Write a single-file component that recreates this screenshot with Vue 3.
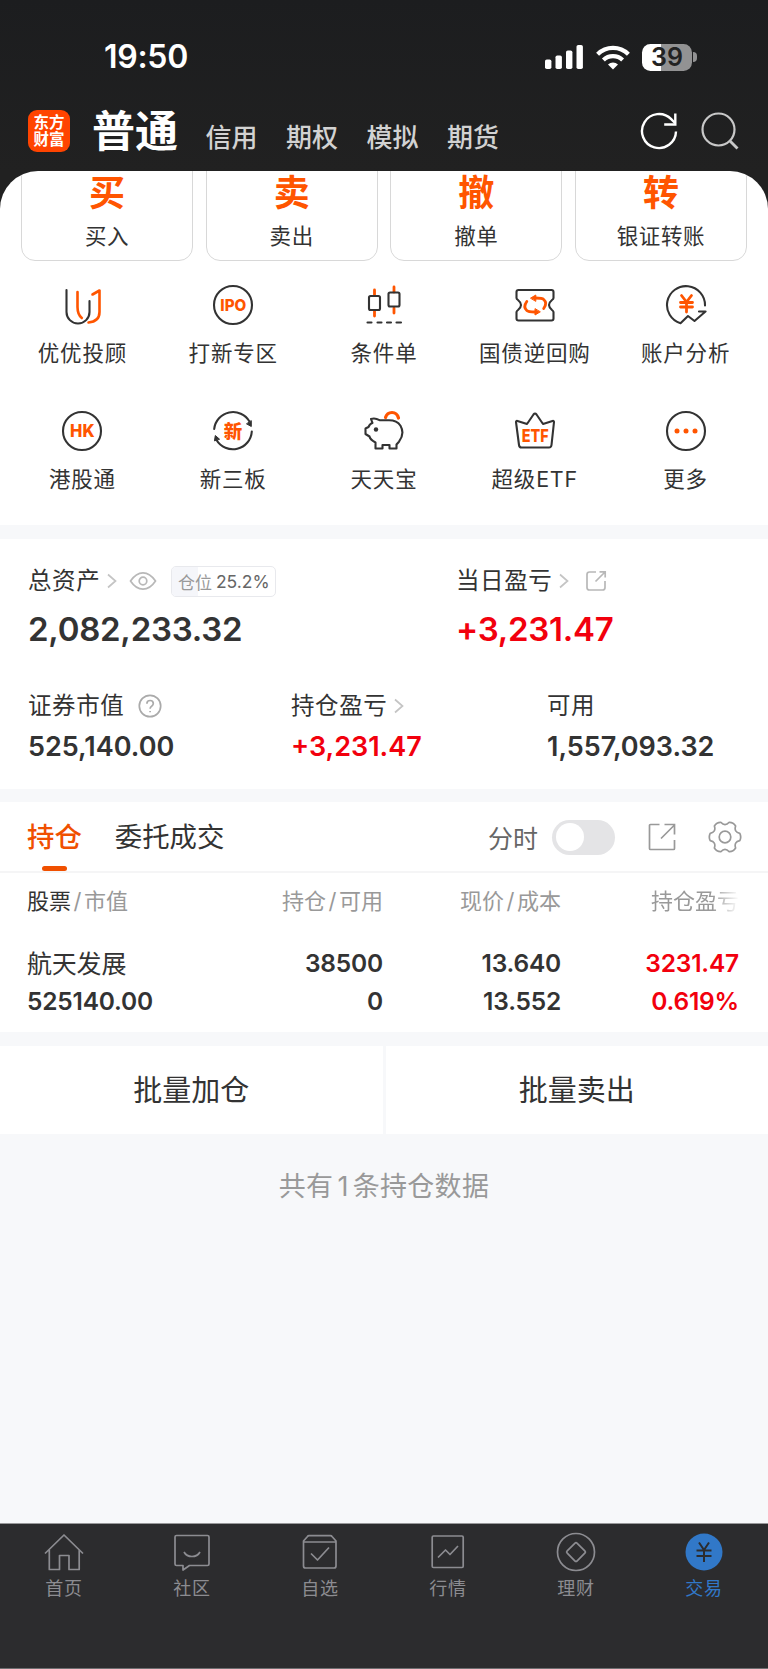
<script setup>
import { ref } from 'vue';

const accountTabs = ['信用', '期权', '模拟', '期货'];

const actions = [
  { mark: '买', label: '买入' },
  { mark: '卖', label: '卖出' },
  { mark: '撤', label: '撤单' },
  { mark: '转', label: '银证转账' }
];

const services = [
  { icon: 'advisor', label: '优优投顾' },
  { icon: 'ipo', label: '打新专区' },
  { icon: 'condition', label: '条件单' },
  { icon: 'repo', label: '国债逆回购' },
  { icon: 'analysis', label: '账户分析' },
  { icon: 'hk', label: '港股通' },
  { icon: 'neeq', label: '新三板' },
  { icon: 'piggy', label: '天天宝' },
  { icon: 'etf', label: '超级ETF' },
  { icon: 'more', label: '更多' }
];

const positions = [
  {
    name: '航天发展',
    value: '525140.00',
    amount: '38500',
    available: '0',
    price: '13.640',
    cost: '13.552',
    profit: '3231.47',
    rate: '0.619%'
  }
];

const navItems = [
  { icon: 'home', label: '首页' },
  { icon: 'community', label: '社区' },
  { icon: 'watch', label: '自选' },
  { icon: 'market', label: '行情' },
  { icon: 'wealth', label: '理财' },
  { icon: 'trade', label: '交易' }
];

const currentNav = ref('trade');
const showMinute = ref(false);
const positionRate = 25.2;
</script>

<template>
  <div class="page">
    <header class="header">
      <div class="status-bar">
        <span class="time">19:50</span>
        <div class="status-icons">
          <svg class="signal" width="38" height="24" viewBox="0 0 38 24" fill="#fff">
            <rect x="0" y="14.5" width="6.4" height="9.5" rx="1.8" />
            <rect x="10.5" y="10.5" width="6.4" height="13.5" rx="1.8" />
            <rect x="21" y="5.5" width="6.4" height="18.5" rx="1.8" />
            <rect x="31.5" y="0" width="6.4" height="24" rx="1.8" />
          </svg>
          <svg class="wifi" width="34" height="25" viewBox="0 0 34 25" fill="none" stroke="#fff" stroke-width="4.2">
            <path d="M1.6 9.2a22 22 0 0 1 30.8 0" />
            <path d="M7.4 15a13.8 13.8 0 0 1 19.2 0" />
            <path d="M17 24.6l-5-5a7.2 7.2 0 0 1 10 0z" fill="#fff" stroke="none" />
          </svg>
          <div class="battery"><span>39</span></div>
          <i class="battery-cap"></i>
        </div>
      </div>
      <div class="account-bar">
        <div class="logo"><span>东方</span><span>财富</span></div>
        <h1>普通</h1>
        <nav class="account-tabs">
          <span v-for="tab in accountTabs" :key="tab">{{ tab }}</span>
        </nav>
        <svg class="refresh" width="38" height="38" viewBox="0 0 38 38" fill="none" stroke="#fff" stroke-width="2.4">
          <path d="M36 19.5A17 17 0 1 1 31.2 7.2L35 11" />
          <path d="M35.3 1.5v11H24.2" />
        </svg>
        <svg class="search" width="38" height="38" viewBox="0 0 38 38" fill="none" stroke="#c8c8c8" stroke-width="2.2">
          <circle cx="17.5" cy="17.5" r="16" />
          <path d="M28.5 28.5l8 8" stroke-width="2.8" />
        </svg>
      </div>
    </header>

    <section class="menu-wrap">
      <div class="menu">
        <div class="actions">
          <div v-for="item in actions" :key="item.label" class="action">
            <span class="action-mark">{{ item.mark }}</span>
            <span class="action-label">{{ item.label }}</span>
          </div>
        </div>
        <div class="services">
          <div v-for="item in services" :key="item.icon" class="service">
            <svg width="42" height="42" viewBox="0 0 42 42" fill="none" stroke="#333" stroke-width="2.1" stroke-linecap="round" stroke-linejoin="round">
              <template v-if="item.icon === 'advisor'">
                <path d="M5.500 6v22a11.500 11.500 0 0 0 23 0V17" />
                <path d="M16.500 8v15q0 7.500 4.300 11M31.500 10.500L38.500 6.500V28q0 9.500-11 10.500" stroke="#ff5500" stroke-width="2.600" />
              </template>
              <template v-else-if="item.icon === 'ipo'">
                <circle cx="21" cy="21" r="19" />
                <text x="21.300" y="27" class="icon-text" font-size="16.500" textLength="26" lengthAdjust="spacingAndGlyphs">IPO</text>
              </template>
              <template v-else-if="item.icon === 'condition'">
                <path d="M11.500 6v5M11.500 27v5M31 3v5M31 24v5" stroke="#ff5500" stroke-width="2.800" />
                <rect x="6" y="12" width="11" height="14" rx="1.500" />
                <rect x="25.500" y="8.500" width="11" height="14" rx="1.500" />
                <path d="M4.500 38.500h4M14.500 38.500h4M24 38.500h4M33.500 38.500h4.500" />
              </template>
              <template v-else-if="item.icon === 'repo'">
                <path d="M4.500 6h33q2 0 2 2v6q0 1-1.500 2-6 5 0 10 1.500 1 1.500 2v6.500q0 2-2 2h-33q-2 0-2-2V28q0-1 1.500-2 6-5 0-10-1.500-1-1.500-2V8q0-2 2-2z" />
                <path d="M12.800 17.500q-4 5.500 0 9 1.500 1.500 8 1.500M29.700 24.500q4-5.500 0-9-1.500-1.500-8-1.500" stroke="#ff5500" stroke-width="2.800" />
                <path d="M16.800 14l5-3v6zM26 28l-5 3v-6z" fill="#ff5500" stroke="#ff5500" stroke-width="1" />
              </template>
              <template v-else-if="item.icon === 'analysis'">
                <path d="M40 21.500A19 19 0 1 0 15.500 39.300L23 32l6.500 5L40.500 27.500h-6.500" />
                <path d="M16.500 11.500l5 6.500 5-6.500M15.500 18.500h12M15.500 23h12M21.500 18.500v9.500" stroke="#ff5500" stroke-width="2.800" />
              </template>
              <template v-else-if="item.icon === 'hk'">
                <circle cx="21" cy="21" r="19" />
                <text x="21.300" y="27.300" class="icon-text" font-size="17.500" textLength="24.500" lengthAdjust="spacingAndGlyphs">HK</text>
              </template>
              <template v-else-if="item.icon === 'neeq'">
                <path d="M2.200 19A19 19 0 0 1 37.500 11.500M39.800 21.500A19 19 0 0 1 4.500 30" />
                <path d="M39.300 11v5.500l-4.500-2.500zM2.500 30.500l.800-5 4 3.500z" fill="#333" stroke-width="1" />
                <text x="21" y="27.500" class="icon-text" font-size="18.500">新</text>
              </template>
              <template v-else-if="item.icon === 'piggy'">
                <path d="M22.500 7.500q1.500-5 6.500-5t6.500 5.500" stroke="#ff5500" stroke-width="3.200" />
                <path d="M8 9q4-1.500 8.500 1.200H26q8 0 11.500 5.500 4.500 8-1.500 16l-2.500 2.800v4h-7v-3.500h-7v3.500H12.500v-6Q7 29.500 6.500 26.500L2.500 24v-5.500L5.500 17Q7 13.500 9.500 13z" />
                <circle cx="13" cy="19.500" r="2.200" fill="#333" stroke="none" />
              </template>
              <template v-else-if="item.icon === 'etf'">
                <path d="M2 12q0-1.500 1.500-1L13 14l6.500-9.500q1.500-2 3 0L29 14l9.500-3q1.500-.500 1.500 1l-2.500 23q-.300 2.500-2.500 2.500H7.500q-2.200 0-2.500-2.500z" />
                <text x="21.300" y="31.500" class="icon-text" font-size="18" textLength="27" lengthAdjust="spacingAndGlyphs">ETF</text>
              </template>
              <template v-else>
                <circle cx="21" cy="21" r="19" />
                <g fill="#ff5500" stroke="none">
                  <circle cx="12" cy="21" r="2.500" />
                  <circle cx="21" cy="21" r="2.500" />
                  <circle cx="30" cy="21" r="2.500" />
                </g>
              </template>
            </svg>
            <span>{{ item.label }}</span>
          </div>
        </div>
      </div>
    </section>

    <section class="assets">
      <div class="asset-row major">
        <div class="asset">
          <div class="asset-label">
            <span>总资产</span>
            <svg class="chevron" width="10" height="16" viewBox="0 0 10 16"><path d="M1 1.500l7.500 6.500L1 14.500" /></svg>
            <svg class="eye" width="28" height="20" viewBox="0 0 28 20">
              <path d="M1.500 10Q7 1.800 14 1.800T26.500 10Q21 18.200 14 18.200T1.500 10z" />
              <circle cx="14" cy="10" r="3.800" />
            </svg>
            <span class="badge">
              <i :style="{ width: positionRate + '%' }"></i>
              <em>仓位</em><b>{{ positionRate }}%</b>
            </span>
          </div>
          <div class="asset-value">2,082,233.32</div>
        </div>
        <div class="asset">
          <div class="asset-label">
            <span>当日盈亏</span>
            <svg class="chevron" width="10" height="16" viewBox="0 0 10 16"><path d="M1 1.500l7.500 6.500L1 14.500" /></svg>
            <svg class="share-small" width="22" height="22" viewBox="0 0 22 22">
              <path d="M11 2H4.500Q2 2 2 4.500v13Q2 20 4.500 20h13q2.500 0 2.500-2.500V11M10.500 11.500L20 2M14.500 1.800h5.700v5.700" />
            </svg>
          </div>
          <div class="asset-value red">+3,231.47</div>
        </div>
      </div>
      <div class="asset-row minor">
        <div class="asset">
          <div class="asset-label">
            <span>证券市值</span>
            <svg class="help" width="24" height="24" viewBox="0 0 24 24">
              <circle cx="12" cy="12" r="10.700" />
              <path d="M8.900 9.700q0-3.200 3.200-3.200t3.200 3q0 1.500-1.700 2.700-1.500 1-1.500 2.600" />
              <path d="M12.100 17v1.200" />
            </svg>
          </div>
          <div class="asset-value">525,140.00</div>
        </div>
        <div class="asset">
          <div class="asset-label">
            <span>持仓盈亏</span>
            <svg class="chevron" width="10" height="16" viewBox="0 0 10 16"><path d="M1 1.500l7.500 6.500L1 14.500" /></svg>
          </div>
          <div class="asset-value red">+3,231.47</div>
        </div>
        <div class="asset">
          <div class="asset-label"><span>可用</span></div>
          <div class="asset-value">1,557,093.32</div>
        </div>
      </div>
    </section>

    <section class="holdings">
      <div class="holding-tabs">
        <span class="tab active">持仓</span>
        <span class="tab">委托成交</span>
        <span class="minute">分时</span>
        <button class="switch" :class="{ on: showMinute }" @click="showMinute = !showMinute"></button>
        <svg class="share" width="28" height="28" viewBox="0 0 28 28" fill="none" stroke="#999" stroke-width="1.700">
          <path d="M11.500 1.500H2.500q-1 0-1 1v23q0 1 1 1h23q1 0 1-1v-8.500M13 15.500L26.500 2M16.500 1.500h10v10" />
        </svg>
        <svg class="gear" width="34" height="34" viewBox="-17 -17 34 34" fill="none" stroke="#999" stroke-width="1.700" stroke-linejoin="round">
          <path d="M14.800 3.700Q8.700 5 10.600 11 8.200 14.900 4.200 14.700 0 10-4.200 14.700-8.200 14.900-10.600 11-8.700 5-14.800 3.700-16.600 0-14.800-3.700-8.700-5-10.600-11-8.200-14.900-4.200-14.700 0-10 4.200-14.700 8.200-14.900 10.600-11 8.700-5 14.800-3.700 16.600 0 14.800 3.700z" />
          <circle r="5.800" />
        </svg>
      </div>
      <div class="grid-row table-head">
        <span><b>股票</b><i>/</i>市值</span>
        <span>持仓<i>/</i>可用</span>
        <span>现价<i>/</i>成本</span>
        <span class="fade">持仓盈亏</span>
      </div>
      <div v-for="row in positions" :key="row.name" class="grid-row position">
        <div><p class="stock-name">{{ row.name }}</p><p>{{ row.value }}</p></div>
        <div><p>{{ row.amount }}</p><p>{{ row.available }}</p></div>
        <div><p>{{ row.price }}</p><p>{{ row.cost }}</p></div>
        <div class="red"><p>{{ row.profit }}</p><p>{{ row.rate }}</p></div>
      </div>
    </section>

    <section class="batch">
      <div>批量加仓</div>
      <div>批量卖出</div>
    </section>
    <p class="summary">共有<span>{{ positions.length }}</span>条持仓数据</p>

    <footer class="nav">
      <div v-for="item in navItems" :key="item.icon" class="nav-item" :class="{ current: item.icon === currentNav }">
        <svg width="40" height="40" viewBox="0 0 40 40" fill="none" stroke="currentColor" stroke-width="1.700" stroke-linejoin="round">
          <template v-if="item.icon === 'home'">
            <path d="M1 21.500L20 3l19 18.500M5.300 18v19.500H15.500V23.500h9.500v14h10.200V18" />
          </template>
          <template v-else-if="item.icon === 'community'">
            <path d="M4.500 3.500h31q1.500 0 1.500 1.500v27q0 1.500-1.500 1.500h-18l-6.500 4.500v-4.500h-6.500Q3 33.500 3 32V5q0-1.500 1.500-1.500z" />
            <path d="M12 20q2.500 4.500 8 4.500t8-4.500" />
          </template>
          <template v-else-if="item.icon === 'watch'">
            <path d="M3.500 9v25q0 2 2 2h28.500q2 0 2-2V9l-4-4.500q-.500-.800-1.500-.800H9q-1 0-1.500.800zM3.500 10H36M11 21.500l6.500 6.500L29 15.500" />
          </template>
          <template v-else-if="item.icon === 'market'">
            <rect x="4.200" y="4" width="31" height="31.500" rx="1.200" />
            <path d="M10 25.500l7.500-7.500 4.500 4.500 8-8.500" />
          </template>
          <template v-else-if="item.icon === 'wealth'">
            <circle cx="20" cy="20" r="18.500" />
            <path d="M18.800 11.300q1.200-1.200 2.400 0l7.600 7.500q1.200 1.200 0 2.400l-7.600 7.600q-1.200 1.200-2.400 0l-7.600-7.600q-1.200-1.200 0-2.400z" />
          </template>
          <template v-else>
            <circle cx="20" cy="20" r="18.500" fill="currentColor" stroke="none" />
            <path d="M15 10.500l5 7.500 5-7.500M12.500 18.500h15M12.500 24h15M20 18v12" stroke="#2c2c2e" stroke-width="2" />
          </template>
        </svg>
        <span>{{ item.label }}</span>
      </div>
    </footer>
  </div>
</template>

<style>
body {
  margin: 0;
  background: #f7f8fa;
}
</style>

<style scoped>
.page {
  display: flex;
  flex-direction: column;
  width: 768px;
  height: 1669px;
  overflow: hidden;
  background: #f7f8fa;
  color: #333;
  font-family: Inter, "Noto Sans CJK SC", sans-serif;
}

.page * {
  box-sizing: border-box;
}

svg {
  flex: none;
  display: block;
}

i,
em {
  font-style: normal;
}

p {
  margin: 0;
}

.red {
  color: #f2000d;
}

.header {
  height: 171px;
  flex: none;
  background: linear-gradient(#1c1d1f, #212121);
}

.status-bar {
  display: flex;
  justify-content: space-between;
  align-items: center;
  height: 74px;
  padding: 40px 71px 0 104px;
  color: #fff;
}

.time {
  font-size: 32px;
  font-weight: 600;
  line-height: 34px;
  letter-spacing: -0.3px;
}

.status-icons {
  display: flex;
  align-items: center;
}

.wifi {
  margin: 0 12px 0 13px;
}

.battery {
  width: 50px;
  height: 27px;
  border-radius: 8.5px;
  background: linear-gradient(90deg, #fff 39%, #929293 39%);
  color: #222;
  font-size: 25px;
  font-weight: 600;
  line-height: 27px;
  text-align: center;
}

.battery-cap {
  width: 4px;
  height: 10px;
  margin-left: 1px;
  border-radius: 0 5px 5px 0;
  background: #929293;
}

.account-bar {
  display: flex;
  align-items: center;
  height: 62px;
  margin-top: 26px;
  padding: 0 29px 0 28px;
}

.logo {
  display: flex;
  flex-direction: column;
  align-items: center;
  justify-content: center;
  width: 42px;
  height: 42px;
  border-radius: 9px;
  background: #ff4400;
  color: #fff;
  font-size: 15.5px;
  font-weight: 700;
  line-height: 17px;
}

h1 {
  margin: 0 0 0 22px;
  font-size: 43px;
  font-weight: 700;
  line-height: 60px;
  color: #fff;
}

.account-tabs {
  display: flex;
  gap: 28.5px;
  flex: 1;
  margin-left: 27.5px;
  padding-top: 14px;
  font-size: 26px;
  font-weight: 500;
  line-height: 30px;
  color: #d2d2d2;
}

.search {
  margin-left: 23px;
}

.menu-wrap {
  flex: none;
  height: 354px;
  background: #212121;
}

.menu {
  height: 100%;
  overflow: hidden;
  border-radius: 38px 38px 0 0;
  background: #fff;
}

.actions {
  display: grid;
  grid-template-columns: repeat(4, 1fr);
  gap: 12.5px;
  height: 104px;
  margin-top: -14px;
  padding: 0 21px;
}

.action {
  display: flex;
  flex-direction: column;
  align-items: center;
  padding-top: 15px;
  border: 1.5px solid #d8d8d8;
  border-radius: 14px;
}

.action-mark {
  font-size: 36px;
  font-weight: 700;
  line-height: 40px;
  color: #ff5500;
}

.action-label {
  margin-top: 10px;
  font-size: 21.5px;
  letter-spacing: 0.6px;
  line-height: 26px;
}

.services {
  display: grid;
  grid-template-columns: repeat(5, 1fr);
  padding: 23px 7px 0;
}

.service {
  display: flex;
  flex-direction: column;
  align-items: center;
  height: 126px;
  font-size: 21.5px;
  letter-spacing: 0.8px;
  line-height: 28px;
}

.service span {
  margin-top: 13px;
}

.icon-text {
  fill: #ff5500;
  stroke: none;
  font-weight: 800;
  text-anchor: middle;
  letter-spacing: 0;
}

.assets {
  flex: none;
  height: 250px;
  margin-top: 14px;
  padding: 26px 28px 0;
  background: #fff;
}

.asset-row {
  display: grid;
}

.major {
  grid-template-columns: 428px 1fr;
  height: 125px;
}

.minor {
  grid-template-columns: 263px 256px 1fr;
}

.asset-label {
  display: flex;
  align-items: center;
  height: 32px;
  font-size: 23.5px;
  letter-spacing: 0.6px;
}

.asset-label svg {
  fill: none;
  stroke: #b8b8b8;
  stroke-width: 1.7;
}

.asset-label > span:first-child {
  line-height: 32px;
}

.asset-label .chevron {
  margin-left: 7px;
  stroke: #c4c4c4;
}

.asset-label .eye {
  margin-left: 12px;
}

.asset-label .help {
  margin-left: 14px;
  stroke: #aaa;
}

.asset-label .share-small {
  margin-left: 16px;
}

.badge {
  position: relative;
  display: flex;
  align-items: center;
  justify-content: center;
  width: 105px;
  height: 31px;
  margin-left: 14px;
  border: 1.5px solid #e8e9ed;
  border-radius: 5px;
  font-size: 17px;
  letter-spacing: 0;
  overflow: hidden;
}

/* 仓位占比底色 */
.badge i {
  position: absolute;
  left: 0;
  top: 0;
  bottom: 0;
  background: #f5f6fa;
}

.badge em {
  position: relative;
  color: #999;
}

.badge b {
  position: relative;
  margin-left: 4px;
  font-size: 17.5px;
  font-weight: 400;
  color: #666;
}

.asset-value {
  font-weight: 600;
}

.major .asset-value {
  margin-top: 11px;
  font-size: 33px;
  letter-spacing: -0.25px;
  line-height: 42px;
}

.minor .asset-value {
  margin-top: 8px;
  font-size: 27px;
  line-height: 34px;
}

.holdings {
  flex: none;
  height: 230px;
  margin-top: 13px;
  background: #fff;
}

.holding-tabs {
  display: flex;
  align-items: center;
  height: 71px;
  padding: 1px 26px 0 27px;
  border-bottom: 2px solid #f5f5f6;
}

.tab {
  position: relative;
  margin-right: 33px;
  font-size: 27.4px;
  line-height: 40px;
}

.tab.active {
  font-weight: 500;
  color: #f05000;
}

.tab.active::after {
  content: '';
  position: absolute;
  left: 15px;
  bottom: -14px;
  width: 25px;
  height: 5px;
  border-radius: 3px;
  background: #f05000;
}

.minute {
  margin-left: auto;
  font-size: 25px;
  color: #666;
}

.switch {
  width: 63px;
  height: 35px;
  margin-left: 14px;
  padding: 3.5px;
  border: 0;
  border-radius: 18px;
  background: #e4e4e6;
  text-align: left;
}

.switch::before {
  content: '';
  display: block;
  width: 28px;
  height: 28px;
  border-radius: 50%;
  background: #fff;
}

.switch.on {
  background: #f05000;
}

.switch.on::before {
  margin-left: auto;
}

.share {
  margin-left: 33px;
}

.gear {
  margin-left: 32px;
}

.grid-row {
  display: grid;
  grid-template-columns: 176px 180px 178px 178px;
  padding: 0 29px 0 27px;
  text-align: right;
}

.grid-row > :first-child {
  text-align: left;
}

.table-head {
  height: 58px;
  line-height: 56px;
  font-size: 22px;
  color: #999;
}

.table-head b {
  font-weight: 400;
  color: #333;
}

.table-head i {
  margin: 0 2.5px;
}

.fade {
  -webkit-mask-image: linear-gradient(90deg, #000 85%, transparent);
  mask-image: linear-gradient(90deg, #000 85%, transparent);
}

.position {
  padding-top: 13px;
  font-size: 24.5px;
  font-weight: 600;
  letter-spacing: -0.2px;
  line-height: 38px;
}

.position .stock-name {
  padding-top: 1px;
  margin-bottom: -1px;
  font-size: 25px;
  font-weight: 400;
}

.batch {
  display: grid;
  flex: none;
  grid-template-columns: 1fr 1fr;
  gap: 3px;
  height: 88px;
  margin-top: 14px;
  font-size: 29px;
  line-height: 86px;
  text-align: center;
}

.batch div {
  padding-top: 2px;
  background: #fff;
}

.summary {
  margin-top: 36px;
  font-size: 27px;
  letter-spacing: 0.3px;
  line-height: 34px;
  text-align: center;
  color: #999;
}

.summary span {
  margin: 0 4px;
}

.nav {
  display: flex;
  height: 146px;
  margin-top: auto;
  flex: none;
  border-top: 1px solid #98989a;
  border-bottom: 1px solid #6e6e70;
  background: #2c2c2e;
}

.nav-item {
  display: flex;
  flex: 1;
  flex-direction: column;
  align-items: center;
  padding-top: 8px;
  font-size: 18px;
  letter-spacing: 0.7px;
  line-height: 24px;
  color: #8c8c91;
}

.nav-item span {
  margin-top: 5px;
}

.nav-item.current {
  color: #3178c8;
}
</style>
